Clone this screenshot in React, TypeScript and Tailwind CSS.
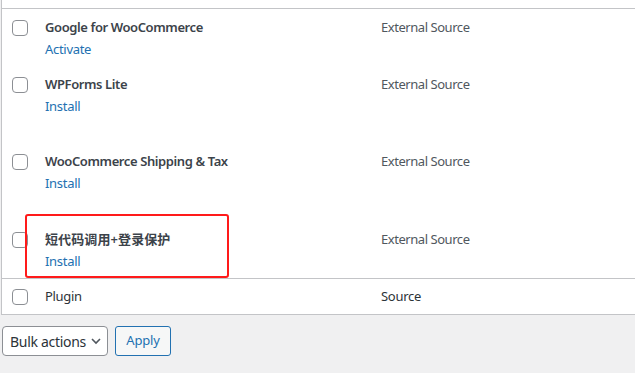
import React from 'react';

type Row = { name: string; action: string; height: string; cjk?: boolean };

const ROWS: Row[] = [
  { name: 'Google for WooCommerce', action: 'Activate', height: 'h-[57px]' },
  { name: 'WPForms Lite', action: 'Install', height: 'h-[77px]' },
  { name: 'WooCommerce Shipping & Tax', action: 'Install', height: 'h-[78px]' },
  { name: '短代码调用+登录保护', action: 'Install', height: 'h-[57px]', cjk: true },
];

function Checkbox() {
  return <span className="block w-4 h-4 rounded-[4px] border border-[#8c8f94] bg-white shrink-0" />;
}

function PluginRow({ row, highlight }: { row: Row; highlight?: boolean }) {
  return (
    <div className={`relative flex items-start ${row.height}`}>
      <div className="w-[43px] pl-[10px] pt-[11px]">
        <Checkbox />
      </div>
      <div className="w-[336px] pt-[9px]">
        <div
          className={`text-[13px] leading-[18px] font-semibold text-[#3c434a] ${
            row.cjk ? 'tracking-[0.1px]' : 'tracking-[-0.4px]'
          }`}
        >
          {row.name}
        </div>
        <div className="mt-[4px] text-[13px] leading-[18px] tracking-[-0.3px] text-[#2271b1]">{row.action}</div>
      </div>
      <div className="pt-[9px] text-[13px] leading-[18px] tracking-[-0.45px] text-[#50575e]">External Source</div>
      {highlight && (
        <div className="absolute left-[23px] top-[-7px] w-[204px] h-[64px] border-2 border-[#ff1a1a] rounded-[3px]" />
      )}
    </div>
  );
}

export default function App() {
  return (
    <div
      className="w-[635px] h-[373px] bg-[#f0f0f1] overflow-hidden"
      style={{ fontFamily: '"Noto Sans", "Noto Sans CJK SC", sans-serif' }}
    >
      <div className="bg-white border-l border-[#c3c4c7] ml-[1px] border-b">
        <div className="h-[8px]" />
        <div className="border-t border-[#c3c4c7]">
          {ROWS.map((row, i) => (
            <PluginRow key={row.name} row={row} highlight={i === 3} />
          ))}
        </div>
        <div className="border-t border-[#c3c4c7] h-[36px] flex items-center">
          <div className="w-[43px] pl-[10px]">
            <Checkbox />
          </div>
          <div className="w-[336px] text-[13px] tracking-[-0.3px] text-[#2c3338]">Plugin</div>
          <div className="text-[13px] tracking-[-0.3px] text-[#2c3338]">Source</div>
        </div>
      </div>
      <div className="flex gap-[7px] mt-[11px] ml-[2px]">
        <div className="w-[106px] h-[30px] rounded-[4px] border border-[#8c8f94] bg-white flex items-center justify-between pl-[7px] pr-[3px] whitespace-nowrap">
          <span className="text-[14px] tracking-[-0.3px] text-[#2c3338]">Bulk actions</span>
          <svg width="16" height="16" viewBox="0 0 20 20" fill="none" stroke="#50575e" strokeWidth="2">
            <path d="M5 7.5l5 5 5-5" />
          </svg>
        </div>
        <div className="w-[56px] h-[30px] rounded-[3px] border border-[#2271b1] bg-[#f6f7f7] flex items-center justify-center">
          <span className="text-[13px] tracking-[-0.2px] text-[#2271b1]">Apply</span>
        </div>
      </div>
    </div>
  );
}
